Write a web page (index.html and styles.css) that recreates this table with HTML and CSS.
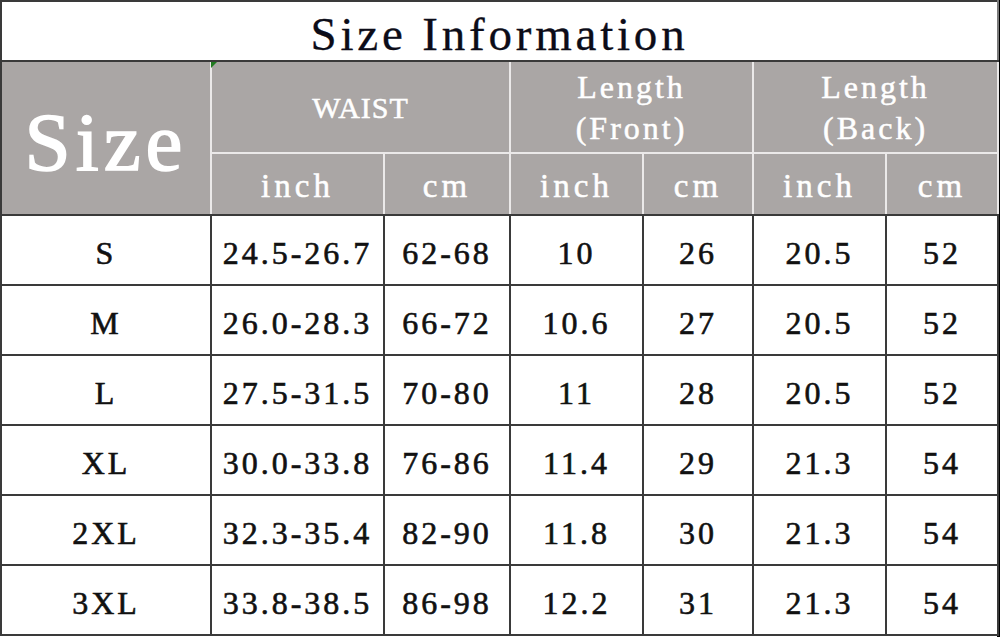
FILE: index.html
```html
<!DOCTYPE html>
<html lang="en">
<head>
<meta charset="utf-8">
<title>Size Information</title>
<link rel="stylesheet" href="styles.css">
</head>
<body>
<div class="sheet">
  <table class="size-table">
    <colgroup>
      <col class="c-size">
      <col class="c-w-in">
      <col class="c-w-cm">
      <col class="c-f-in">
      <col class="c-f-cm">
      <col class="c-b-in">
      <col class="c-b-cm">
    </colgroup>
    <thead>
      <tr class="title-row">
        <th colspan="7" class="title">Size Information</th>
      </tr>
      <tr class="head-1">
        <th rowspan="2" class="size-head">Size</th>
        <th colspan="2" class="group waist">WAIST</th>
        <th colspan="2" class="group">Length<br>(Front)</th>
        <th colspan="2" class="group">Length<br>(Back)</th>
      </tr>
      <tr class="head-2">
        <th class="unit">inch</th>
        <th class="unit">cm</th>
        <th class="unit">inch</th>
        <th class="unit">cm</th>
        <th class="unit">inch</th>
        <th class="unit">cm</th>
      </tr>
    </thead>
    <tbody>
      <tr><td>S</td><td>24.5-26.7</td><td>62-68</td><td>10</td><td>26</td><td>20.5</td><td>52</td></tr>
      <tr><td>M</td><td>26.0-28.3</td><td>66-72</td><td>10.6</td><td>27</td><td>20.5</td><td>52</td></tr>
      <tr><td>L</td><td>27.5-31.5</td><td>70-80</td><td>11</td><td>28</td><td>20.5</td><td>52</td></tr>
      <tr><td>XL</td><td>30.0-33.8</td><td>76-86</td><td>11.4</td><td>29</td><td>21.3</td><td>54</td></tr>
      <tr><td>2XL</td><td>32.3-35.4</td><td>82-90</td><td>11.8</td><td>30</td><td>21.3</td><td>54</td></tr>
      <tr><td>3XL</td><td>33.8-38.5</td><td>86-98</td><td>12.2</td><td>31</td><td>21.3</td><td>54</td></tr>
    </tbody>
  </table>
</div>
</body>
</html>
```

FILE: styles.css
```css
html, body {
  margin: 0;
  padding: 0;
  background: #ffffff;
}

body {
  width: 1000px;
  height: 637px;
  overflow: hidden;
  font-family: "Liberation Serif", "Times New Roman", serif;
}

.sheet {
  width: 997px;
  height: 637px;
  border-right: 3px solid #000000;
  background: #ffffff;
}

.size-table {
  width: 997px;
  table-layout: fixed;
  border-collapse: collapse;
  border: 2px solid #3a3a3a;
  border-right-color: #7a7a7a;
}

.c-size { width: 210px; }
.c-w-in { width: 173px; }
.c-w-cm { width: 126px; }
.c-f-in { width: 133px; }
.c-f-cm { width: 110px; }
.c-b-in { width: 133px; }
.c-b-cm { width: 112px; }

th, td {
  padding: 0;
  text-align: center;
  vertical-align: middle;
}

/* Title */
.title-row { height: 60px; }

.title {
  font-weight: normal;
  font-size: 47px;
  letter-spacing: 3.8px;
  color: #0c0c18;
  padding-top: 6px;
  border-bottom: 2px solid #3a3a3a;
  line-height: 1;
  -webkit-text-stroke: 0.3px #0c0c18;
}

/* Gray header */
.head-1 { height: 92px; }
.head-2 { height: 62px; }

.head-1 th,
.head-2 th {
  background: #aaa6a5;
  color: #ffffff;
  font-weight: normal;
  border: 2px solid #ebe9e9;
  -webkit-text-stroke: 0.5px #ffffff;
}

.head-1 th {
  border-top: 2px solid #3a3a3a;
}

.head-2 th,
.size-head {
  border-bottom: 2px solid #3a3a3a !important;
}

.size-head {
  font-size: 83px;
  font-weight: bold;
  letter-spacing: 5px;
  line-height: 1;
  padding-top: 8px !important;
  border-left: 2px solid #3a3a3a !important;
  -webkit-text-stroke: 1.6px #ffffff !important;
}

.group {
  font-size: 32px;
  letter-spacing: 3px;
  line-height: 41px;
  padding-top: 2px !important;
}

.waist {
  position: relative;
  font-size: 30px;
  letter-spacing: 1px;
  padding-bottom: 2px !important;
}

.waist::before {
  content: "";
  position: absolute;
  top: 0;
  left: -1px;
  width: 0;
  height: 0;
  border-top: 6px solid #1f7a1f;
  border-right: 6px solid transparent;
}

.unit {
  font-size: 33px;
  letter-spacing: 4px;
  padding-top: 4px !important;
}

/* Body */
tbody tr { height: 70px; }

tbody td {
  font-size: 32px;
  letter-spacing: 3px;
  color: #111111;
  border: 2px solid #3a3a3a;
  -webkit-text-stroke: 0.6px #111111;
  padding-top: 6px;
}
```
